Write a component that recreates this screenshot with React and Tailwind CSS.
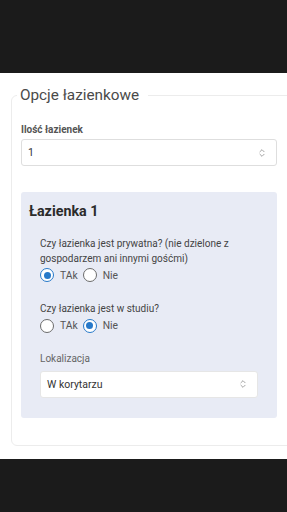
import { ChevronsUpDown } from 'lucide-react'

function SelectBox({ value, className = '' }) {
  return (
    <div
      className={`flex h-[27px] items-center justify-between rounded-[3px] border border-[#dedede] bg-white pl-[6px] pr-[9px] text-[10.5px] text-[#333] ${className}`}
    >
      <span>{value}</span>
      <ChevronsUpDown size={10} strokeWidth={1.6} className="text-[#777]" />
    </div>
  )
}

function Radio({ checked, label }) {
  return (
    <label className="flex items-center gap-[6px]">
      {checked ? (
        <span className="flex h-[14px] w-[14px] items-center justify-center rounded-full border-[1.5px] border-[#2779c9] bg-white">
          <span className="h-[7px] w-[7px] rounded-full bg-[#2779c9]" />
        </span>
      ) : (
        <span className="h-[14px] w-[14px] rounded-full border-[1.5px] border-[#6b6b6b] bg-white" />
      )}
      <span className="text-[10.3px] text-[#555]">{label}</span>
    </label>
  )
}

export default function App() {
  return (
    <div
      className="flex h-[512px] w-[287px] flex-col overflow-hidden bg-white"
      style={{ fontFamily: 'Roboto, "Noto Sans", sans-serif' }}
    >
      <div className="h-[73px] shrink-0 bg-[#1b1b1b]" />

      <div className="flex-1 pt-[12px]">
        <fieldset className="ml-[11px] w-[282px] rounded-l-[6px] border border-[#ececec] pb-[27px] pl-[9px] pr-[15px]">
          <legend className="ml-[-4px] pl-[3px] pr-[9px] text-[15.3px] leading-[20px] text-[#4a4a4a]">
            Opcje łazienkowe
          </legend>

          <div className="mt-[18px] text-[10px] font-bold leading-[14px] text-[#555]">Ilość łazienek</div>
          <SelectBox value="1" className="mt-[2px]" />

          <div className="mt-[26px] rounded-[3px] bg-[#e8ebf5] pb-[20px] pl-[8px] pr-[19px] pt-[9px]">
            <div className="text-[14.3px] font-bold leading-[20px] text-[#2b2b2b]">Łazienka 1</div>

            <div className="pl-[11px]">
              <div className="mt-[14.5px] text-[10px] leading-[15px] text-[#444]">
                Czy łazienka jest prywatna? (nie dzielone z gospodarzem ani innymi gośćmi)
              </div>
              <div className="mt-[2px] flex items-center gap-[5px]">
                <Radio checked label="TAk" />
                <Radio label="Nie" />
              </div>

              <div className="mt-[18px] text-[10px] leading-[15px] text-[#444]">Czy łazienka jest w studiu?</div>
              <div className="mt-[2px] flex items-center gap-[5px]">
                <Radio label="TAk" />
                <Radio checked label="Nie" />
              </div>

              <div className="mt-[18px] text-[10px] leading-[15px] text-[#666]">Lokalizacja</div>
              <SelectBox value="W korytarzu" className="mt-[4.5px] border-[#e6e6e6]" />
            </div>
          </div>
        </fieldset>
      </div>

      <div className="h-[53px] shrink-0 bg-[#1b1b1b]" />
    </div>
  )
}
